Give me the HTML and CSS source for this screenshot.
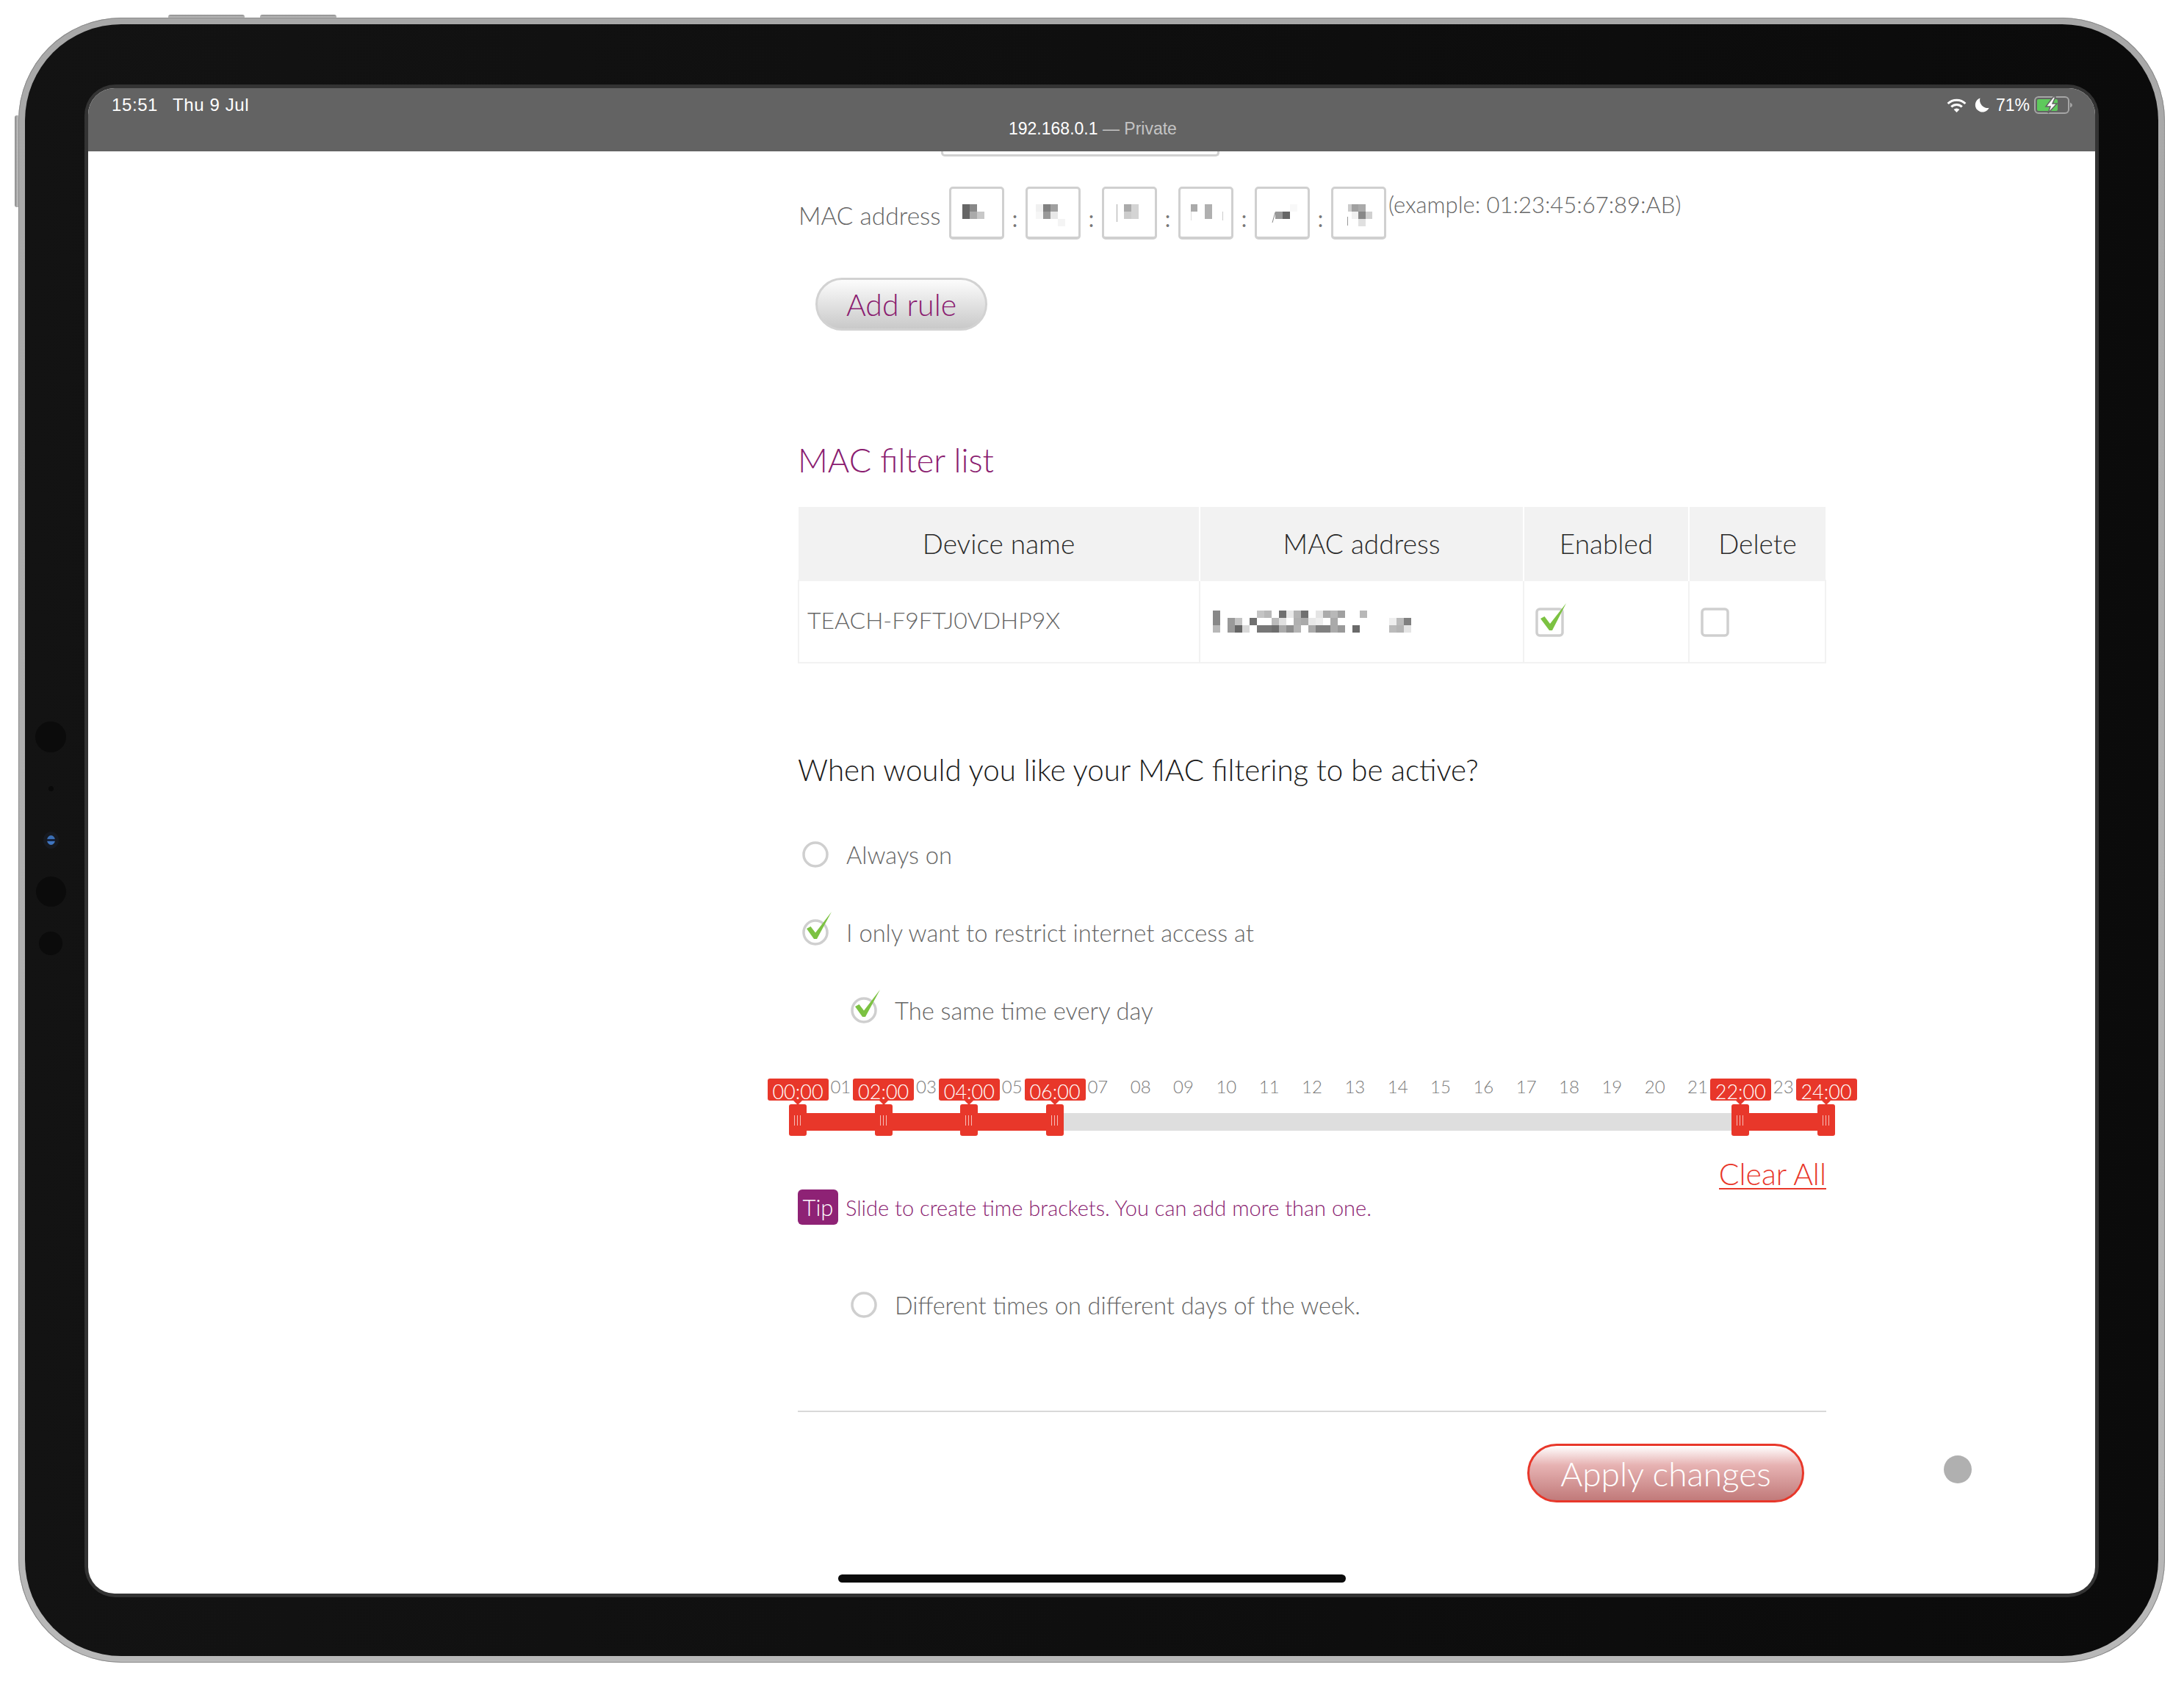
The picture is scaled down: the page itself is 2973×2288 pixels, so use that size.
FILE: index.html
```html
<!DOCTYPE html>
<html lang="en">
<head>
    <meta charset="UTF-8">
    <meta name="viewport" content="width=device-width, initial-scale=1.0">
    <title>MAC filtering</title>
    <link rel="stylesheet" href="styles.css">
</head>
<body>
    <div class="device">
        <span class="side-btn side-top-a"></span>
        <span class="side-btn side-top-b"></span>
        <span class="side-btn side-left"></span>

        <div class="bezel">
            <span class="sensor sensor-a"></span>
            <span class="sensor sensor-dot"></span>
            <span class="sensor sensor-lens"></span>
            <span class="sensor sensor-b"></span>
            <span class="sensor sensor-c"></span>

            <div class="ring">
                <div class="screen">
                    <header class="status-bar">
                        <div class="status-top">
                            <div class="status-time"><span>15:51</span><span>Thu 9 Jul</span></div>
                            <div class="status-icons">
                                <svg class="ic-wifi" width="27" height="19" viewBox="0 0 27 19">
                                    <path d="M1.6 7 A17 17 0 0 1 25.4 7" fill="none" stroke="#fff" stroke-width="3"/>
                                    <path d="M6.2 11.4 A10.5 10.5 0 0 1 20.8 11.4" fill="none" stroke="#fff" stroke-width="3"/>
                                    <path d="M13.5 19 L9.6 15 A5.6 5.6 0 0 1 17.4 15 Z" fill="#fff"/>
                                </svg>
                                <svg class="ic-moon" width="20" height="20" viewBox="0 0 20 20">
                                    <path d="M7.5 0.5 A9.8 9.8 0 1 0 19.6 13.8 A10.5 10.5 0 0 1 7.5 0.5 Z" fill="#fff"/>
                                </svg>
                                <span class="status-pct">71%</span>
                                <svg class="ic-battery" width="53" height="24" viewBox="0 0 53 24">
                                    <rect x="1" y="1" width="46" height="22" rx="5" fill="none" stroke="#a6a6a6" stroke-width="2"/>
                                    <rect x="4" y="4" width="28" height="16" rx="2" fill="#5ec95c"/>
                                    <path d="M49 8.5 Q52 10 52 12 Q52 14 49 15.5 Z" fill="#a6a6a6"/>
                                    <path d="M26 1 L16 14 H22 L19 23 L31 10 H25 L29 1 Z" fill="#fff" stroke="#636363" stroke-width="1.5"/>
                                </svg>
                            </div>
                        </div>
                        <div class="status-url">192.168.0.1 <span>— Private</span></div>
                    </header>

                    <main class="main">
                        <div class="cut-input"></div>

                        <div class="mac-row">
                            <label class="mac-label">MAC address</label>
                            <div class="mac-box">
                                <svg width="69" height="66" viewBox="0 0 69 66"><rect x="15" y="21" width="10" height="10" fill="#666"/><rect x="25" y="21" width="10" height="10" fill="#888"/><rect x="15" y="31" width="10" height="10" fill="#666"/><rect x="25" y="31" width="10" height="10" fill="#aaa"/><rect x="35" y="31" width="10" height="10" fill="#c8c8c8"/></svg>
                            </div>
                            <span class="mac-sep">:</span>
                            <div class="mac-box">
                                <svg width="69" height="66" viewBox="0 0 69 66"><rect x="11" y="21" width="10" height="10" fill="#f0f0f0"/><rect x="21" y="21" width="10" height="10" fill="#808080"/><rect x="31" y="21" width="10" height="10" fill="#a0a0a0"/><rect x="11" y="31" width="10" height="10" fill="#f6f6f6"/><rect x="21" y="31" width="10" height="10" fill="#999"/><rect x="31" y="31" width="10" height="10" fill="#e8e8e8"/><rect x="41" y="41" width="10" height="10" fill="#f4f4f4"/></svg>
                            </div>
                            <span class="mac-sep">:</span>
                            <div class="mac-box">
                                <svg width="69" height="66" viewBox="0 0 69 66"><rect x="17" y="21" width="1" height="24" fill="#aaa"/><rect x="27" y="21" width="10" height="10" fill="#aaa"/><rect x="37" y="21" width="10" height="10" fill="#d4d4d4"/><rect x="27" y="31" width="10" height="10" fill="#ccc"/><rect x="37" y="31" width="10" height="10" fill="#d4d4d4"/></svg>
                            </div>
                            <span class="mac-sep">:</span>
                            <div class="mac-box">
                                <svg width="69" height="66" viewBox="0 0 69 66"><rect x="14" y="21" width="9" height="10" fill="#aaa"/><rect x="33" y="21" width="10" height="20" fill="#b0b0b0"/><rect x="14" y="31" width="1" height="12" fill="#ddd"/><rect x="57" y="31" width="1" height="12" fill="#ccc"/></svg>
                            </div>
                            <span class="mac-sep">:</span>
                            <div class="mac-box">
                                <svg width="69" height="66" viewBox="0 0 69 66"><path d="M21 46 L25 32" stroke="#888" stroke-width="1" fill="none"/><rect x="25" y="31" width="10" height="10" fill="#999"/><rect x="35" y="31" width="10" height="10" fill="#666"/><rect x="45" y="21" width="10" height="10" fill="#f8f8f8"/></svg>
                            </div>
                            <span class="mac-sep">:</span>
                            <div class="mac-box">
                                <svg width="69" height="66" viewBox="0 0 69 66"><rect x="20" y="21" width="5" height="10" fill="#ccc"/><rect x="25" y="21" width="9" height="10" fill="#a0a0a0"/><rect x="34" y="21" width="10" height="10" fill="#aaa"/><rect x="25" y="31" width="9" height="10" fill="#f0f0f0"/><rect x="34" y="31" width="10" height="10" fill="#888"/><rect x="44" y="31" width="9" height="10" fill="#d0d0d0"/><rect x="34" y="41" width="10" height="10" fill="#e0e0e0"/><rect x="19" y="38" width="1" height="12" fill="#999"/></svg>
                            </div>
                            <span class="mac-example">(example: 01:23:45:67:89:AB)</span>
                        </div>

                        <button class="btn-add">Add rule</button>

                        <h2 class="section-title">MAC filter list</h2>

                        <table class="filter-table">
                            <thead>
                                <tr>
                                    <th class="col-name">Device name</th>
                                    <th class="col-mac">MAC address</th>
                                    <th class="col-enabled">Enabled</th>
                                    <th class="col-delete">Delete</th>
                                </tr>
                            </thead>
                            <tbody>
                                <tr>
                                    <td>TEACH-F9FTJ0VDHP9X</td>
                                    <td>
                                        <svg class="mosaic" width="270" height="30" viewBox="0 0 270 30">
                                            <g fill="#888"><rect x="0" y="0" width="10" height="20"/></g>
                                            <rect x="60" y="0" width="10" height="10" fill="#c4c4c4"/><rect x="70" y="0" width="10" height="10" fill="#b8b8b8"/><rect x="90" y="0" width="10" height="10" fill="#707070"/><rect x="100" y="0" width="10" height="10" fill="#e8e8e8"/><rect x="110" y="0" width="10" height="10" fill="#b4b4b4"/><rect x="120" y="0" width="10" height="10" fill="#707070"/><rect x="140" y="0" width="10" height="10" fill="#e4e4e4"/><rect x="150" y="0" width="10" height="10" fill="#ababab"/><rect x="160" y="0" width="10" height="10" fill="#b8b8b8"/><rect x="170" y="0" width="10" height="10" fill="#a0a0a0"/><rect x="200" y="0" width="10" height="10" fill="#b8b8b8"/>
                                            <rect x="20" y="10" width="10" height="10" fill="#9a9a9a"/><rect x="30" y="10" width="10" height="10" fill="#c4c4c4"/><rect x="50" y="10" width="10" height="10" fill="#707070"/><rect x="80" y="10" width="10" height="10" fill="#bbb"/><rect x="90" y="10" width="10" height="10" fill="#e0e0e0"/><rect x="110" y="10" width="10" height="10" fill="#b0b0b0"/><rect x="120" y="10" width="10" height="10" fill="#aaa"/><rect x="130" y="10" width="10" height="10" fill="#e8e8e8"/><rect x="140" y="10" width="10" height="10" fill="#eee"/><rect x="160" y="10" width="10" height="10" fill="#aaa"/><rect x="240" y="10" width="10" height="10" fill="#eee"/><rect x="250" y="10" width="10" height="10" fill="#bbb"/><rect x="260" y="10" width="10" height="10" fill="#808080"/>
                                            <rect x="0" y="20" width="10" height="10" fill="#b8b8b8"/><rect x="20" y="20" width="10" height="10" fill="#999"/><rect x="30" y="20" width="10" height="10" fill="#666"/><rect x="40" y="20" width="10" height="10" fill="#d8d8d8"/><rect x="60" y="20" width="10" height="10" fill="#777"/><rect x="70" y="20" width="10" height="10" fill="#777"/><rect x="80" y="20" width="10" height="10" fill="#6e6e6e"/><rect x="90" y="20" width="10" height="10" fill="#aaa"/><rect x="100" y="20" width="10" height="10" fill="#8e8e8e"/><rect x="110" y="20" width="10" height="10" fill="#b4b4b4"/><rect x="130" y="20" width="10" height="10" fill="#aaa"/><rect x="140" y="20" width="10" height="10" fill="#808080"/><rect x="150" y="20" width="10" height="10" fill="#808080"/><rect x="160" y="20" width="10" height="10" fill="#aaa"/><rect x="170" y="20" width="10" height="10" fill="#999"/><rect x="190" y="20" width="10" height="10" fill="#6a6a6a"/><rect x="240" y="20" width="10" height="10" fill="#bbb"/><rect x="250" y="20" width="10" height="10" fill="#b4b4b4"/><rect x="260" y="20" width="10" height="10" fill="#e4e4e4"/>
                                        </svg>
                                    </td>
                                    <td>
                                        <svg class="tick-box" width="39" height="40" viewBox="0 0 39 40">
                                            <rect x="2" y="2" width="35" height="36" rx="4" fill="#fff" stroke="#cfcfcf" stroke-width="3.5"/>
                                            <path d="M7 15 L12.5 12 L20 22 L42 -6 L23 31 L19 31 Z" fill="#7cc242"/>
                                        </svg>
                                    </td>
                                    <td>
                                        <svg class="tick-box" width="39" height="40" viewBox="0 0 39 40">
                                            <rect x="2" y="2" width="35" height="36" rx="4" fill="#fff" stroke="#cfcfcf" stroke-width="3.5"/>
                                        </svg>
                                    </td>
                                </tr>
                            </tbody>
                        </table>

                        <p class="question">When would you like your MAC filtering to be active?</p>

                        <div class="option option-first">
                            <svg class="radio" width="36" height="36" viewBox="0 0 36 36"><circle cx="18" cy="18" r="16" fill="#fff" stroke="#cfcfcf" stroke-width="3.5"/></svg>
                            <span>Always on</span>
                        </div>
                        <div class="option">
                            <svg class="radio" width="36" height="36" viewBox="0 0 36 36">
                                <circle cx="18" cy="18" r="16" fill="#fff" stroke="#cfcfcf" stroke-width="3.5"/>
                                <path d="M6 13 L11.5 10 L18 18.5 L40 -10 L20 27 L16 27 Z" fill="#7cc242"/>
                            </svg>
                            <span>I only want to restrict internet access at</span>
                        </div>
                        <div class="option option-sub">
                            <svg class="radio" width="36" height="36" viewBox="0 0 36 36">
                                <circle cx="18" cy="18" r="16" fill="#fff" stroke="#cfcfcf" stroke-width="3.5"/>
                                <path d="M6 13 L11.5 10 L18 18.5 L40 -10 L20 27 L16 27 Z" fill="#7cc242"/>
                            </svg>
                            <span>The same time every day</span>
                        </div>

                        <div class="slider">
                            <div class="slider-hours">
                                <span class="bubble">00:00</span><span>01</span>
                                <span class="bubble">02:00</span><span>03</span>
                                <span class="bubble">04:00</span><span>05</span>
                                <span class="bubble">06:00</span><span>07</span>
                                <span>08</span><span>09</span><span>10</span><span>11</span><span>12</span>
                                <span>13</span><span>14</span><span>15</span><span>16</span><span>17</span>
                                <span>18</span><span>19</span><span>20</span><span>21</span>
                                <span class="bubble">22:00</span><span>23</span>
                                <span class="bubble">24:00</span>
                            </div>
                            <div class="slider-track">
                                <span class="slider-fill" style="left: 0%; width: 25%"></span>
                                <span class="slider-fill" style="left: 91.667%; width: 8.333%"></span>
                                <span class="slider-handle" style="left: 0%"></span>
                                <span class="slider-handle" style="left: 8.333%"></span>
                                <span class="slider-handle" style="left: 16.667%"></span>
                                <span class="slider-handle" style="left: 25%"></span>
                                <span class="slider-handle" style="left: 91.667%"></span>
                                <span class="slider-handle" style="left: 100%"></span>
                            </div>
                        </div>

                        <div class="clear-row"><a class="clear-all">Clear All</a></div>

                        <div class="tip-row">
                            <span class="tip-badge">Tip</span>
                            <span class="tip-text">Slide to create time brackets. You can add more than one.</span>
                        </div>

                        <div class="option option-sub option-diff">
                            <svg class="radio" width="36" height="36" viewBox="0 0 36 36"><circle cx="18" cy="18" r="16" fill="#fff" stroke="#cfcfcf" stroke-width="3.5"/></svg>
                            <span>Different times on different days of the week.</span>
                        </div>

                        <hr class="divider">

                        <button class="btn-apply">Apply changes</button>
                    </main>

                    <span class="assistive-dot"></span>
                    <span class="home-bar"></span>
                </div>
            </div>
        </div>
    </div>
</body>
</html>
```

FILE: styles.css
```css
body {
    margin: 0;
    background: #fff;
    font-family: Lato, "Liberation Sans", sans-serif;
    font-weight: 300;
}
.device {
    position: relative;
    box-sizing: border-box;
    width: 2922px;
    height: 2239px;
    margin: 24px 0 0 25px;
    padding: 9px;
    border-radius: 140px;
    background: linear-gradient(180deg, #a8a8a8, #b8b8b8);
    box-shadow: inset 0 0 0 1px #8a8a8a;
}
.side-btn {
    position: absolute;
    background: linear-gradient(180deg, #8a8a8a, #c4c4c4);
}
.side-top-a, .side-top-b {
    top: -4px;
    width: 104px;
    height: 4px;
    border-radius: 3px 3px 0 0;
}
.side-top-a { left: 204px; }
.side-top-b { left: 329px; }
.side-left {
    top: 133px;
    left: -5px;
    width: 5px;
    height: 125px;
    border-radius: 3px 0 0 3px;
    background: linear-gradient(90deg, #8a8a8a, #c4c4c4);
}
.bezel {
    position: relative;
    box-sizing: border-box;
    height: 100%;
    padding: 82px 81px 80px 81px;
    border-radius: 131px;
    background: linear-gradient(90deg, #131313, #0b0b0b);
}
.sensor {
    position: absolute;
    border-radius: 50%;
    background: #0b0b0b;
}
.sensor-a { top: 949px; width: 42px; height: 42px; left: 14px; }
.sensor-dot { top: 1037px; width: 7px; height: 7px; left: 32px; background: #0a0a0a; }
.sensor-lens {
    top: 1104px;
    left: 30px;
    width: 11px;
    height: 13px;
    background: linear-gradient(180deg, #3b6fb5 0 35%, #14223d 35% 60%, #3f75c0 60%);
    box-shadow: 0 0 0 5px #171a20;
}
.sensor-b { top: 1160px; width: 41px; height: 41px; left: 15px; }
.sensor-c { top: 1235px; width: 32px; height: 32px; left: 19px; }
.ring {
    box-sizing: border-box;
    height: 100%;
    padding: 5px;
    border-radius: 42px;
    background: #333;
}
.screen {
    position: relative;
    display: flex;
    flex-direction: column;
    height: 100%;
    overflow: hidden;
    border-radius: 36px;
    background: #fff;
}
.status-bar {
    box-sizing: border-box;
    height: 86px;
    padding: 8px 30px 0 32px;
    background: #636363;
    color: #fff;
    font-family: "Liberation Sans", sans-serif;
    font-weight: 400;
    font-size: 24px;
}
.status-top {
    display: flex;
    justify-content: space-between;
    align-items: center;
    height: 30px;
}
.status-time {
    display: flex;
    gap: 20px;
    letter-spacing: 0.6px;
}
.status-icons {
    display: flex;
    align-items: center;
}
.ic-moon { margin-left: 11px; }
.status-pct { margin-left: 9px; font-size: 23px; }
.ic-battery { margin-left: 6px; }
.status-url {
    margin-top: 3px;
    margin-left: 1221px;
    font-size: 23px;
    line-height: 28px;
}
.status-url span { color: #c4c4c4; }
.main {
    flex: 1;
    box-sizing: border-box;
    width: 2366px;
    padding-left: 966px;
    color: #666;
}
.cut-input {
    box-sizing: border-box;
    width: 379px;
    height: 7px;
    margin-left: 195px;
    border: 3px solid #d0d0d0;
    border-top: none;
    border-radius: 0 0 5px 5px;
}
.mac-row {
    display: flex;
    align-items: flex-start;
    margin-top: 41px;
    width: 1400px;
    height: 72px;
    white-space: nowrap;
}
.mac-label {
    width: 206px;
    margin-top: 16px;
    padding-left: 1px;
    box-sizing: border-box;
    font-size: 33.5px;
    line-height: 46px;
}
.mac-box {
    box-sizing: border-box;
    width: 75px;
    height: 72px;
    border: 3px solid #d0d0d0;
    border-bottom-width: 4px;
    border-radius: 5px;
    background: #fff;
}
.mac-box svg { display: block; }
.mac-sep {
    width: 29px;
    margin-top: 20px;
    text-align: center;
    font-size: 30px;
    line-height: 46px;
    color: #777;
    font-weight: 400;
}
.mac-example {
    margin-top: 2px;
    margin-left: 3px;
    font-size: 31px;
    line-height: 44px;
}
.btn-add {
    display: block;
    box-sizing: border-box;
    width: 234px;
    height: 72px;
    margin: 52px 0 0 24px;
    padding: 0;
    border: 3px solid #d2d2d2;
    border-radius: 36px;
    background: linear-gradient(180deg, #fcfcfc, #c9c9c9);
    color: #8a1c70;
    font-family: inherit;
    font-weight: 300;
    font-size: 41px;
}
.section-title {
    margin: 148px 0 0;
    font-weight: 300;
    font-size: 45px;
    line-height: 56px;
    color: #8a1c70;
}
.filter-table {
    width: 1398px;
    margin-top: 36px;
    table-layout: fixed;
    border-collapse: collapse;
}
.col-name { width: 546px; }
.col-mac { width: 441px; }
.col-enabled { width: 225px; }
.col-delete { width: 186px; }
.filter-table th {
    box-sizing: border-box;
    height: 100px;
    padding: 0;
    background: #f2f2f2;
    border-left: 2px solid #fff;
    color: #2a2a2a;
    font-weight: 300;
    font-size: 37px;
}
.filter-table th:first-child { border-left: none; }
.filter-table td {
    height: 112px;
    padding: 0 0 6px 11px;
    box-sizing: border-box;
    border: 2px solid #f2f2f2;
    font-size: 32px;
    white-space: nowrap;
}
.mosaic {
    display: block;
    margin: 6px 0 0 6px;
    filter: blur(0.6px);
}
.tick-box {
    display: block;
    margin: 7px 0 0 4px;
    overflow: visible;
}
.question {
    margin: 120px 0 0;
    width: 1400px;
    color: #1a1a1a;
    font-size: 40.3px;
    line-height: 50px;
}
.option {
    display: flex;
    align-items: center;
    gap: 24px;
    height: 60px;
    margin-top: 46px;
    padding-left: 6px;
    font-size: 32.7px;
}
.option-first { margin-top: 60px; }
.option-sub { padding-left: 72px; }
.option-diff { margin-top: 79px; font-size: 32.4px; }
.radio { overflow: visible; flex: none; }
.slider {
    width: 1400px;
    margin-top: 63px;
}
.slider-hours {
    display: grid;
    grid-template-columns: repeat(25, minmax(0, 1fr));
    width: 1458.33px;
    height: 35px;
    margin-left: -29.17px;
    color: #7a7a7a;
    font-size: 24px;
    line-height: 22px;
}
.slider-hours span {
    justify-self: center;
    white-space: nowrap;
}
.slider-hours .bubble {
    position: relative;
    z-index: 1;
    box-sizing: border-box;
    width: 83px;
    height: 30px;
    padding-top: 5px;
    border-radius: 3px;
    background: #e8372a;
    color: #fff;
    font-size: 27px;
    line-height: 26px;
    text-align: center;
}
.bubble::after {
    content: "";
    position: absolute;
    left: 50%;
    top: 30px;
    margin-left: -6px;
    border: 6px solid transparent;
    border-top-color: #e8372a;
    border-bottom: none;
}
.slider-track {
    position: relative;
    height: 24px;
    margin-top: 12px;
    background: #dedede;
}
.slider-fill {
    position: absolute;
    top: 0;
    height: 24px;
    background: #e8372a;
}
.slider-handle {
    position: absolute;
    top: -12px;
    width: 24px;
    height: 43px;
    margin-left: -12px;
    border-radius: 3px;
    background: #e8372a;
}
.slider-handle::after {
    content: "";
    position: absolute;
    left: 7px;
    top: 15px;
    width: 10px;
    height: 14px;
    background: repeating-linear-gradient(90deg, #f6bdb7 0 1.2px, transparent 1.2px 4px);
}
.clear-row {
    width: 1400px;
    height: 48px;
    margin-top: 32px;
    text-align: right;
}
.clear-all {
    display: inline-block;
    height: 46px;
    border-bottom: 2px solid #e8372a;
    color: #e8372a;
    font-size: 41px;
    line-height: 54px;
}
.tip-row {
    display: flex;
    align-items: center;
    gap: 10px;
    height: 48px;
}
.tip-badge {
    width: 55px;
    height: 48px;
    border-radius: 6px;
    background: #8e2275;
    color: #fff;
    font-size: 31px;
    line-height: 48px;
    text-align: center;
}
.tip-text {
    color: #8a1c70;
    font-size: 29px;
    white-space: nowrap;
}
.divider {
    box-sizing: border-box;
    width: 1400px;
    height: 2px;
    margin: 114px 0 0;
    border: none;
    background: #d8d8d8;
}
.btn-apply {
    display: block;
    box-sizing: border-box;
    width: 377px;
    height: 80px;
    margin: 43px 0 0 993px;
    padding: 0;
    border: 3px solid #e8372a;
    border-radius: 40px;
    background: linear-gradient(180deg, #fff, #e7b3b3 35%, #c17a7a);
    color: #fff;
    font-family: inherit;
    font-weight: 300;
    font-size: 46px;
}
.assistive-dot {
    position: absolute;
    left: 2526px;
    top: 1861px;
    width: 38px;
    height: 38px;
    border-radius: 50%;
    background: #b0b0b0;
}
.home-bar {
    position: absolute;
    left: 1021px;
    top: 2023px;
    width: 691px;
    height: 11px;
    border-radius: 6px;
    background: #0b0b0b;
}
```
